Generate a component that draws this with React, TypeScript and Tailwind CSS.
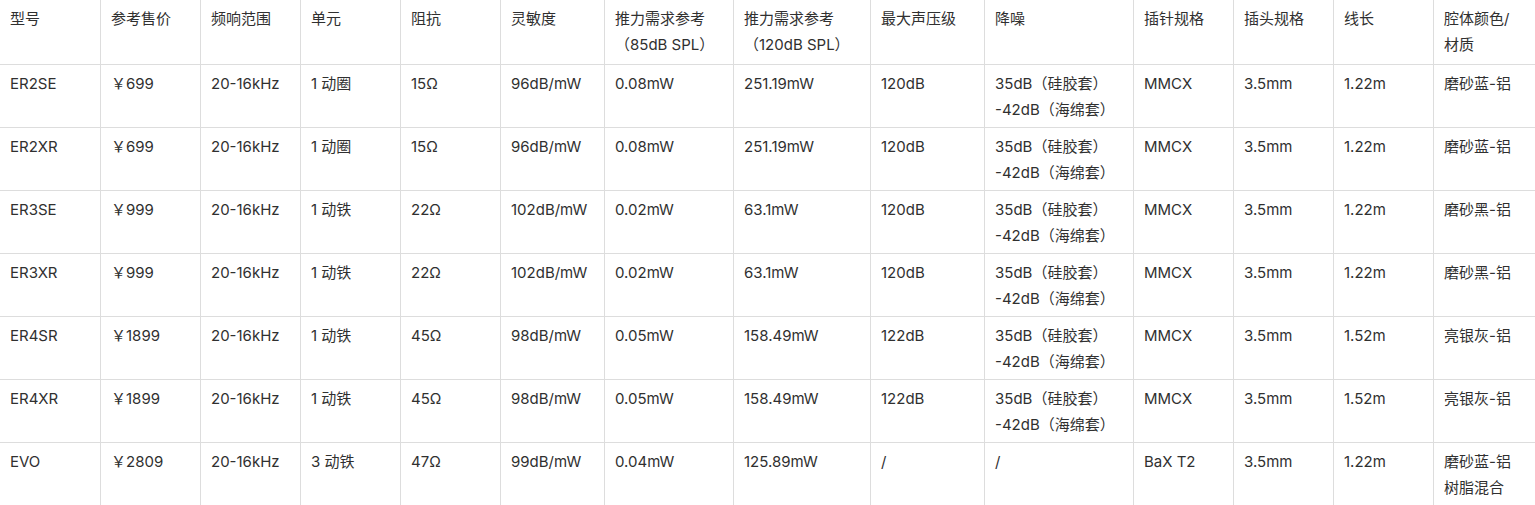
import React from 'react'

interface Row {
  model: string
  price: string
  freq: string
  driver: string
  impedance: string
  sensitivity: string
  power85: string
  power120: string
  maxSpl: string
  noise: string[]
  pin: string
  plug: string
  cable: string
  shell: string[]
}

const noise = ['35dB（硅胶套）', '-42dB（海绵套）']

const rows: Row[] = [
  { model: 'ER2SE', price: '￥699', freq: '20-16kHz', driver: '1 动圈', impedance: '15Ω', sensitivity: '96dB/mW', power85: '0.08mW', power120: '251.19mW', maxSpl: '120dB', noise, pin: 'MMCX', plug: '3.5mm', cable: '1.22m', shell: ['磨砂蓝-铝'] },
  { model: 'ER2XR', price: '￥699', freq: '20-16kHz', driver: '1 动圈', impedance: '15Ω', sensitivity: '96dB/mW', power85: '0.08mW', power120: '251.19mW', maxSpl: '120dB', noise, pin: 'MMCX', plug: '3.5mm', cable: '1.22m', shell: ['磨砂蓝-铝'] },
  { model: 'ER3SE', price: '￥999', freq: '20-16kHz', driver: '1 动铁', impedance: '22Ω', sensitivity: '102dB/mW', power85: '0.02mW', power120: '63.1mW', maxSpl: '120dB', noise, pin: 'MMCX', plug: '3.5mm', cable: '1.22m', shell: ['磨砂黑-铝'] },
  { model: 'ER3XR', price: '￥999', freq: '20-16kHz', driver: '1 动铁', impedance: '22Ω', sensitivity: '102dB/mW', power85: '0.02mW', power120: '63.1mW', maxSpl: '120dB', noise, pin: 'MMCX', plug: '3.5mm', cable: '1.22m', shell: ['磨砂黑-铝'] },
  { model: 'ER4SR', price: '￥1899', freq: '20-16kHz', driver: '1 动铁', impedance: '45Ω', sensitivity: '98dB/mW', power85: '0.05mW', power120: '158.49mW', maxSpl: '122dB', noise, pin: 'MMCX', plug: '3.5mm', cable: '1.52m', shell: ['亮银灰-铝'] },
  { model: 'ER4XR', price: '￥1899', freq: '20-16kHz', driver: '1 动铁', impedance: '45Ω', sensitivity: '98dB/mW', power85: '0.05mW', power120: '158.49mW', maxSpl: '122dB', noise, pin: 'MMCX', plug: '3.5mm', cable: '1.52m', shell: ['亮银灰-铝'] },
  { model: 'EVO', price: '￥2809', freq: '20-16kHz', driver: '3 动铁', impedance: '47Ω', sensitivity: '99dB/mW', power85: '0.04mW', power120: '125.89mW', maxSpl: '/', noise: ['/'], pin: 'BaX T2', plug: '3.5mm', cable: '1.22m', shell: ['磨砂蓝-铝', '树脂混合'] },
]

// column widths chosen so the rules land where the reference draws them
const widths = [101, 100, 100, 100, 100, 104, 129, 137, 114, 149, 100, 100, 100, 110]

const headers: string[][] = [
  ['型号'], ['参考售价'], ['频响范围'], ['单元'], ['阻抗'], ['灵敏度'],
  ['推力需求参考', '（85dB SPL）'], ['推力需求参考', '（120dB SPL）'],
  ['最大声压级'], ['降噪'], ['插针规格'], ['插头规格'], ['线长'], ['腔体颜色/', '材质'],
]

const cell = 'border border-[#dddddd] px-[10px] pt-[6px] pb-0 align-top text-left font-normal'

function Lines({ lines }: { lines: string[] }) {
  return (
    <>
      {lines.map((l, i) => (
        <div key={i} className="whitespace-nowrap">{l}</div>
      ))}
    </>
  )
}

export default function App() {
  return (
    <div className="w-[1535px] h-[505px] overflow-hidden bg-white">
      <table
        className="w-[1544px] max-w-none table-fixed border-collapse text-[15px] leading-[26px] text-[#303030] -mt-px -ml-px"
        style={{ fontFamily: 'Inter, "Noto Sans CJK SC", sans-serif' }}
      >
        <colgroup>
          {widths.map((w, i) => (
            <col key={i} style={{ width: w }} />
          ))}
        </colgroup>
        <thead>
          <tr className="h-[65px]">
            {headers.map((h, i) => (
              <th key={i} className={cell}>
                <Lines lines={h} />
              </th>
            ))}
          </tr>
        </thead>
        <tbody>
          {rows.map((r) => (
            <tr key={r.model} className="h-[63px]">
              <td className={cell}>{r.model}</td>
              <td className={cell}>{r.price}</td>
              <td className={cell}>{r.freq}</td>
              <td className={cell}>{r.driver}</td>
              <td className={cell}>{r.impedance}</td>
              <td className={cell}>{r.sensitivity}</td>
              <td className={cell}>{r.power85}</td>
              <td className={cell}>{r.power120}</td>
              <td className={cell}>{r.maxSpl}</td>
              <td className={cell}><Lines lines={r.noise} /></td>
              <td className={cell}>{r.pin}</td>
              <td className={cell}>{r.plug}</td>
              <td className={cell}>{r.cable}</td>
              <td className={cell}><Lines lines={r.shell} /></td>
            </tr>
          ))}
        </tbody>
      </table>
    </div>
  )
}
